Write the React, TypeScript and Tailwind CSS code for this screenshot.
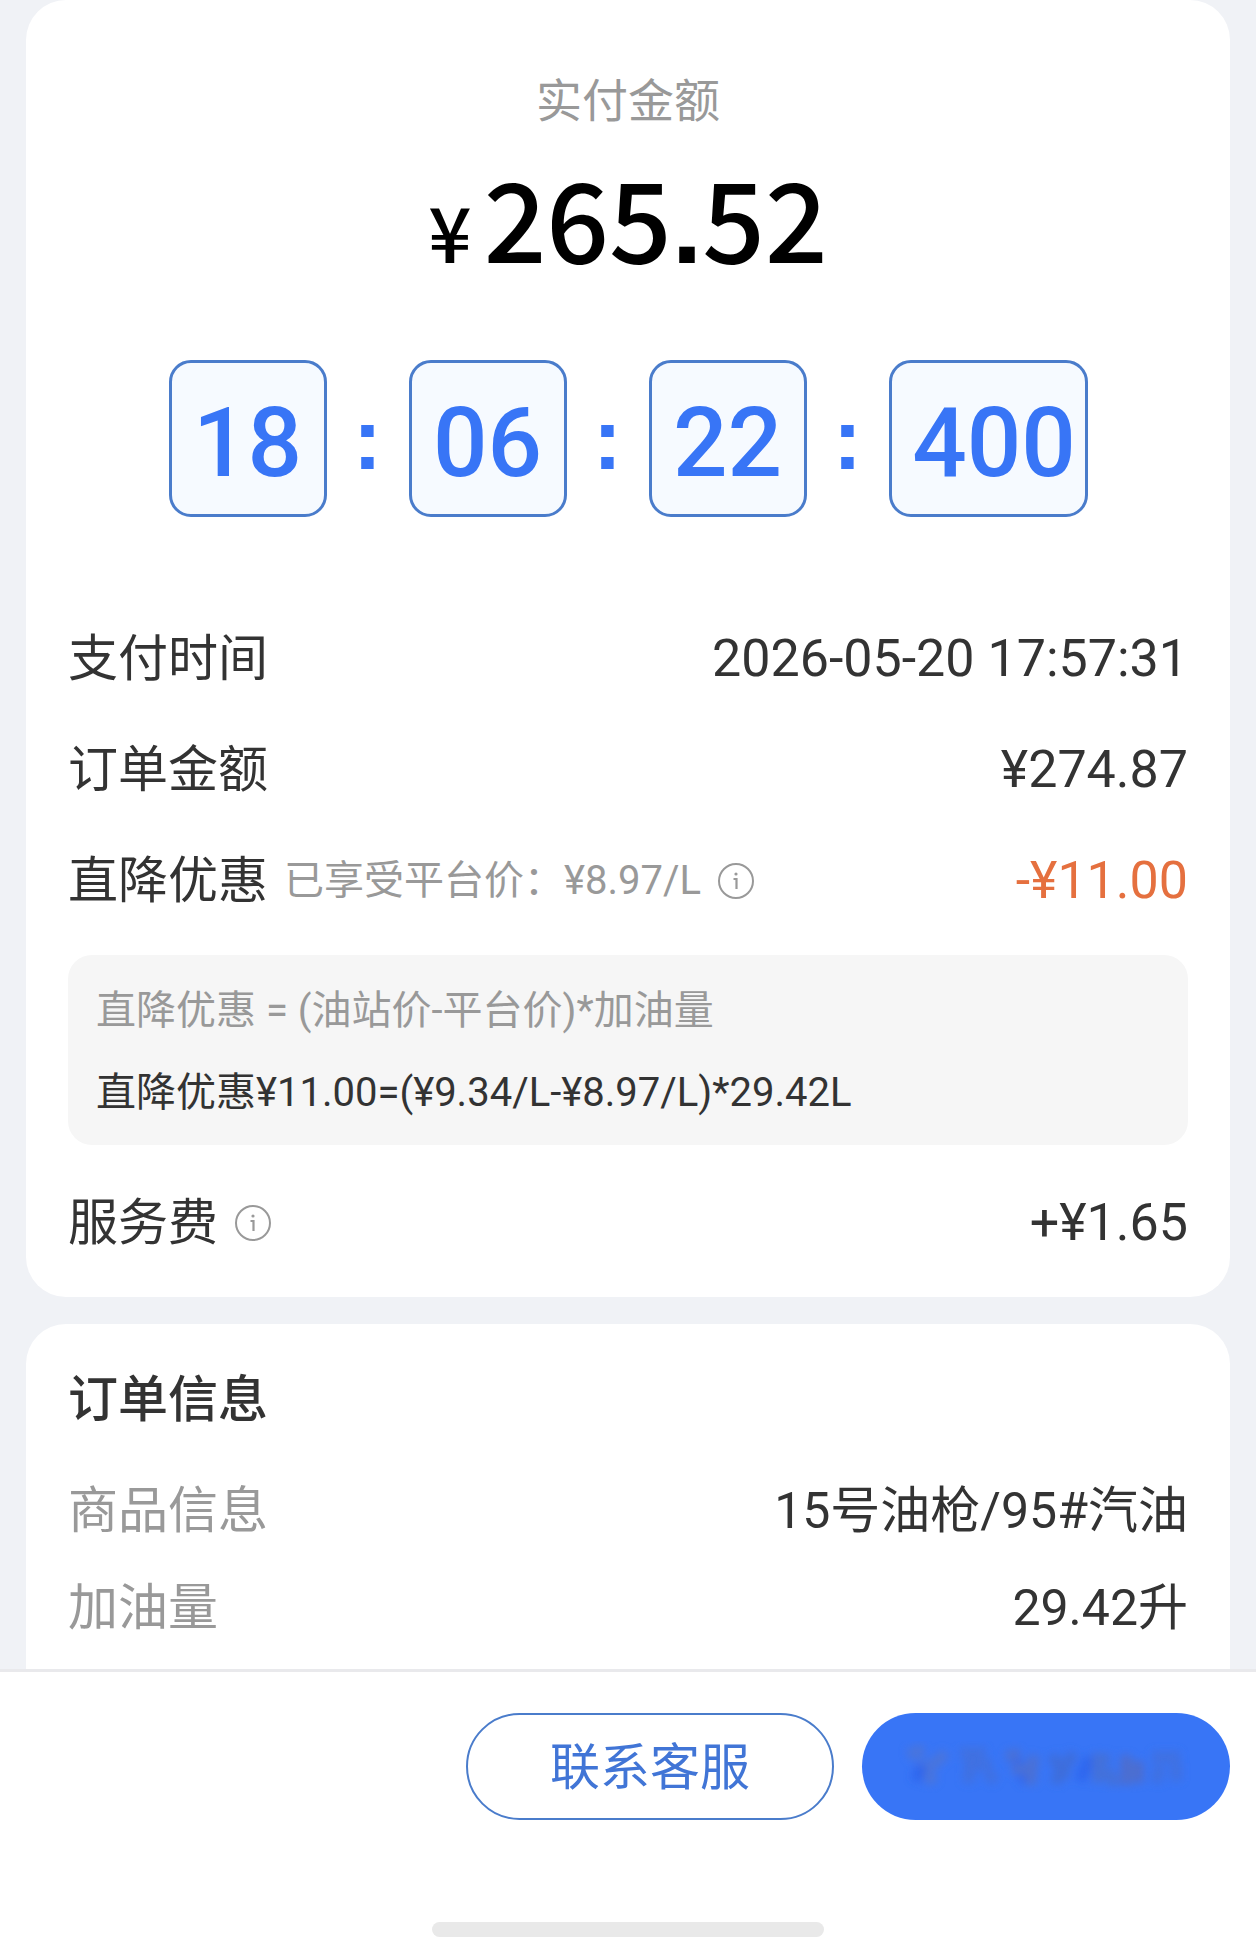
import type { ReactNode } from 'react'

const COUNTDOWN = ['18', '06', '22', '400']

function InfoButton({ className = '' }: { className?: string }) {
  return (
    <button type="button" className={`shrink-0 ${className}`}>
      <svg width="38" height="38" viewBox="0 0 38 38" fill="none">
        <circle cx="19" cy="19" r="17" stroke="#999999" strokeWidth="2" />
        <circle cx="19" cy="12" r="1.6" fill="#999999" />
        <path d="M16.5 17H19.5V27" stroke="#999999" strokeWidth="2.2" />
      </svg>
    </button>
  )
}

function Row({ label, children }: { label: ReactNode; children: ReactNode }) {
  return (
    <div className="flex items-center justify-between h-14">
      <dt className="flex items-center">{label}</dt>
      <dd>{children}</dd>
    </div>
  )
}

function TimeBox({ value }: { value: string }) {
  return (
    <span
      className={`h-[157px] pt-2 flex items-center justify-center rounded-[22px] border-3 border-[#4a7ccb] bg-[#f6faff] ${
        value.length > 2 ? 'w-[199px] pl-3' : 'w-[158px]'
      }`}
    >
      {value}
    </span>
  )
}

export default function App() {
  return (
    <div className="min-h-screen flex flex-col bg-[#f0f2f6] text-[#333333] font-[Roboto,'Noto_Sans_CJK_SC',sans-serif]">
      <main className="flex-1 flex flex-col gap-[27px] px-[26px]">
        {/* Payment */}
        <section className="bg-white rounded-[40px] px-[42px] pt-[66px] pb-[46px]">
          <h1 className="text-center text-[46px] leading-[70px] text-[#999999]">
            实付金额
          </h1>
          <p className="mt-6 h-[120px] flex items-baseline justify-center gap-3 font-medium text-black leading-none font-['Noto_Sans_CJK_SC',sans-serif]">
            <span className="text-[76px]">¥</span>
            <span className="text-[110px]">
              265
              <span className="font-['Liberation_Sans',sans-serif] font-bold">
                .
              </span>
              52
            </span>
          </p>

          {/* Countdown */}
          <div className="mt-20 flex items-center justify-center text-[96px] leading-none font-medium text-[#3875f6]">
            {COUNTDOWN.map((value, i) => (
              <div key={value} className="flex items-center">
                {i > 0 && (
                  <span className="w-[82px] text-center text-[88px] font-bold font-['Liberation_Sans',sans-serif]">
                    :
                  </span>
                )}
                <TimeBox value={value} />
              </div>
            ))}
          </div>

          <dl className="mt-[114px] flex flex-col gap-[55px] text-[52px] leading-[56px]">
            <Row label={<span className="text-[50px]">支付时间</span>}>
              2026-05-20 17:57:31
            </Row>
            <Row label={<span className="text-[50px]">订单金额</span>}>
              ¥274.87
            </Row>
            <Row
              label={
                <>
                  <span className="text-[50px]">直降优惠</span>
                  <span className="ml-4 text-[40px] text-[#999999]">
                    已享受平台价：¥8.97/L
                  </span>
                  <InfoButton className="ml-4" />
                </>
              }
            >
              <span className="text-[#e5703f]">-¥11.00</span>
            </Row>
          </dl>

          {/* Discount formula */}
          <div className="mt-[46px] rounded-3xl bg-[#f6f6f6] px-7 pt-7 pb-6 flex flex-col gap-[26px] text-[40px] leading-[56px]">
            <p className="text-[#999999]">直降优惠 = (油站价-平台价)*加油量</p>
            <p>直降优惠¥11.00=(¥9.34/L-¥8.97/L)*29.42L</p>
          </div>

          <dl className="mt-[50px] text-[52px] leading-[56px]">
            <Row
              label={
                <>
                  <span className="text-[50px]">服务费</span>
                  <InfoButton className="ml-4" />
                </>
              }
            >
              +¥1.65
            </Row>
          </dl>
        </section>

        {/* Order */}
        <section className="flex-1 bg-white rounded-t-[40px] px-[42px] pt-12 pb-8 text-[50px] leading-[56px]">
          <h2 className="font-medium">订单信息</h2>
          <dl className="mt-[55px] flex flex-col gap-[41px]">
            <Row label={<span className="text-[#999999]">商品信息</span>}>
              15号油枪/95#汽油
            </Row>
            <Row label={<span className="text-[#999999]">加油量</span>}>
              29.42升
            </Row>
          </dl>
        </section>
      </main>

      {/* Bottom actions */}
      <footer className="bg-white border-t-3 border-[#e9e9ec]">
        <div className="flex justify-end gap-7 px-[26px] pt-[41px]">
          <button
            type="button"
            className="w-[368px] h-[107px] pt-1 rounded-full border-2 border-[#4a7ccb] text-[50px] text-[#4175d6]"
          >
            联系客服
          </button>
          <button
            type="button"
            className="w-[368px] h-[107px] rounded-full bg-[#3875f6] flex items-center justify-center"
          >
            <svg width="304" height="64" viewBox="0 0 304 64" fill="none">
              <defs>
                <filter id="smudge" x="-10%" y="-20%" width="120%" height="140%">
                  <feGaussianBlur stdDeviation="4" />
                </filter>
              </defs>
              <g filter="url(#smudge)" strokeWidth="11" opacity="0.8">
                <path d="M14 20L30 14M24 26L40 48M52 18L34 34" stroke="#4f74d4" />
                <path d="M28 30L22 46M122 24L132 48M196 22L186 46" stroke="#2a62ec" />
                <path d="M66 18H92M70 30H98M78 20L74 48M92 38L102 46" stroke="#4370dc" />
                <path d="M112 22L126 18M118 34H142M140 20L136 50" stroke="#4f6fcd" />
                <path d="M158 20L172 44M180 18L160 48" stroke="#406cd4" />
                <path d="M198 24H216M204 18V48M212 34L222 50" stroke="#4670d2" />
                <path d="M232 20V50M244 26V48" stroke="#526cc4" />
                <path d="M258 22H286M266 30L262 48M282 28V46" stroke="#436fdc" />
              </g>
            </svg>
          </button>
        </div>
        <div className="mt-[102px] mx-auto w-[392px] h-[15px] rounded-lg bg-[#e9e9e9]" />
      </footer>
    </div>
  )
}
